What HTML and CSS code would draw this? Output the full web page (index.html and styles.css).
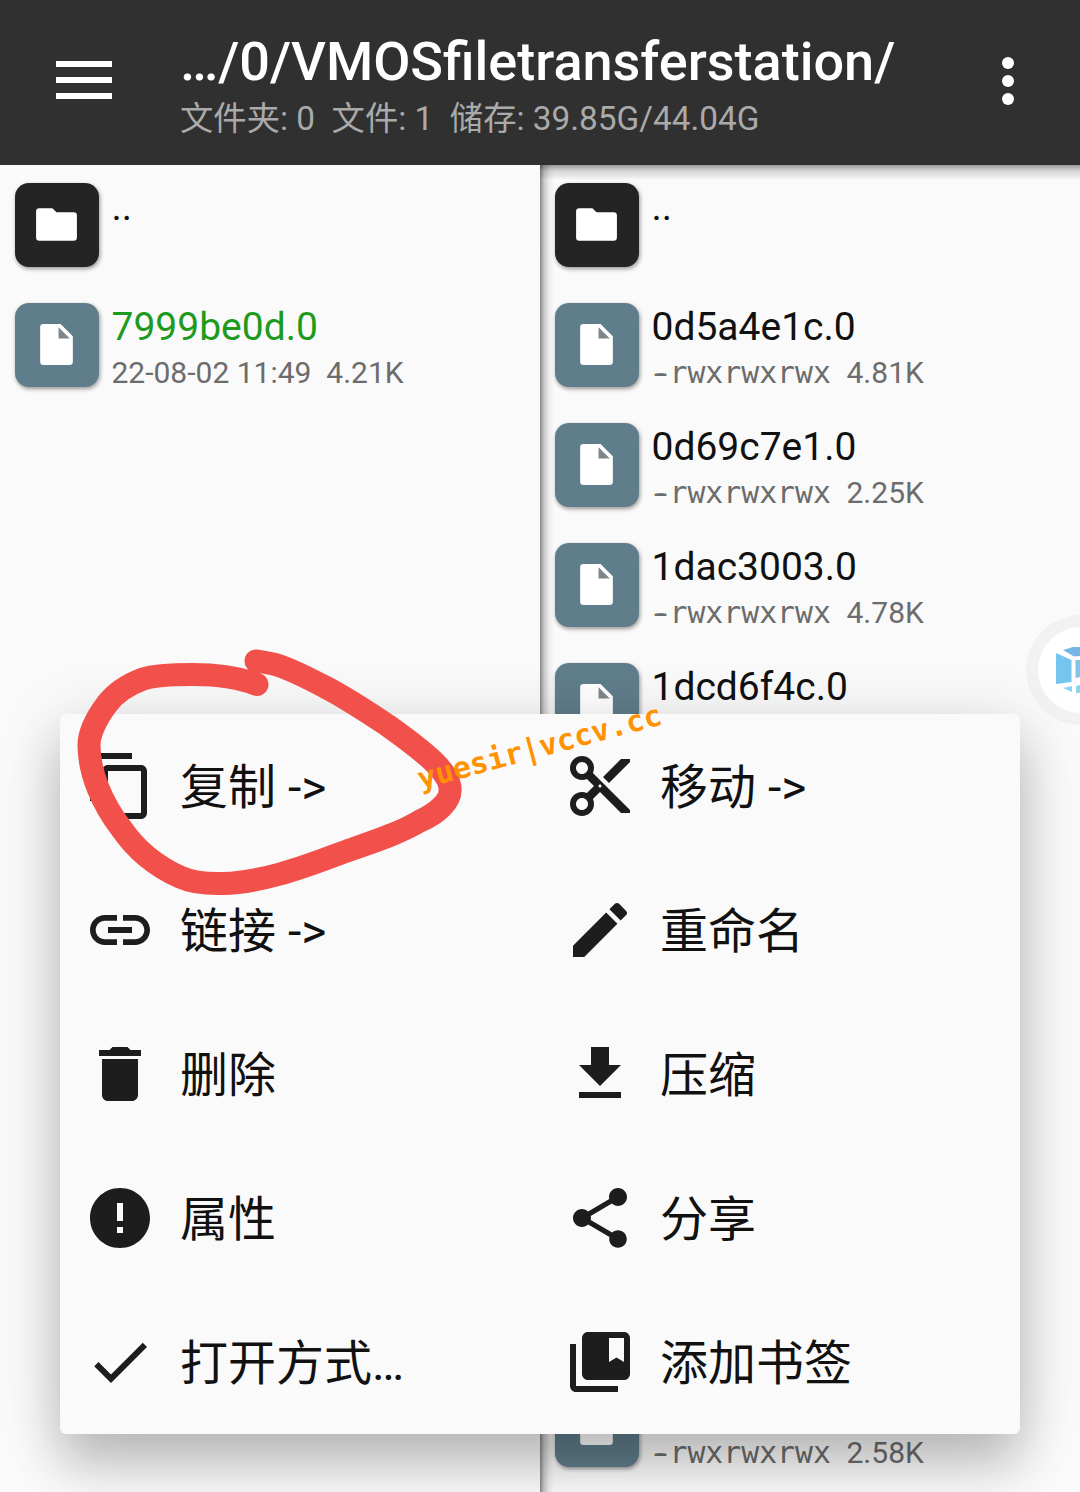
FILE: index.html
```html
<!DOCTYPE html>
<html lang="zh-CN">
<head>
<meta charset="utf-8">
<title>文件管理</title>
<link rel="stylesheet" href="styles.css">
</head>
<body>
<svg class="defs" width="0" height="0">
  <symbol id="folder" viewBox="0 0 24 24"><path d="M10 4H3.600Q2 4 2 5.600V18.400Q2 20 3.600 20H20.400Q22 20 22 18.400V7.600Q22 6 20.400 6H12z"/></symbol>
  <symbol id="file" viewBox="0 0 24 24"><path fill="#7d868a" d="M12 3h3l4.500 5v2H12z"/><path fill-rule="evenodd" d="M5.600 2Q4 2 4 3.600v16.800Q4 22 5.600 22h12.800q1.600 0 1.600-1.600V8l-6-6zM13 9V3.500L18.500 9z"/></symbol>
</svg>
<div class="screen">
  <header class="bar">
    <svg class="burger" width="56" height="38" viewBox="0 0 56 38"><path d="M0 0h56v6H0zM0 16h56v6H0zM0 32h56v6H0z"/></svg>
    <div class="heading">
      <h1 class="title">…/0/VMOSfiletransferstation/</h1>
      <p class="stats">文件夹: 0&nbsp; 文件: 1&nbsp; 储存: 39.85G/44.04G</p>
    </div>
    <svg class="more" width="12" height="48" viewBox="0 0 12 48"><circle cx="6" cy="6" r="6"/><circle cx="6" cy="24" r="6"/><circle cx="6" cy="42" r="6"/></svg>
  </header>
  <main class="panes">
    <section class="pane">
      <div class="row"><span class="tile dark"><svg><use href="#folder"/></svg></span><div class="info"><div class="name">..</div></div></div>
      <div class="row"><span class="tile"><svg><use href="#file"/></svg></span><div class="info"><div class="name green">7999be0d.0</div><div class="meta">22-08-02 11:49&nbsp; 4.21K</div></div></div>
    </section>
    <section class="pane active">
      <div class="row"><span class="tile dark"><svg><use href="#folder"/></svg></span><div class="info"><div class="name">..</div></div></div>
      <div class="row"><span class="tile"><svg><use href="#file"/></svg></span><div class="info"><div class="name">0d5a4e1c.0</div><div class="meta"><span class="mode"><span class="type">-</span>rwxrwxrwx</span>4.81K</div></div></div>
      <div class="row"><span class="tile"><svg><use href="#file"/></svg></span><div class="info"><div class="name">0d69c7e1.0</div><div class="meta"><span class="mode"><span class="type">-</span>rwxrwxrwx</span>2.25K</div></div></div>
      <div class="row"><span class="tile"><svg><use href="#file"/></svg></span><div class="info"><div class="name">1dac3003.0</div><div class="meta"><span class="mode"><span class="type">-</span>rwxrwxrwx</span>4.78K</div></div></div>
      <div class="row"><span class="tile"><svg><use href="#file"/></svg></span><div class="info"><div class="name">1dcd6f4c.0</div></div></div>
      <div class="row last"><span class="tile"><svg><use href="#file"/></svg></span><div class="info"><div class="name"></div><div class="meta"><span class="mode"><span class="type">-</span>rwxrwxrwx</span>2.58K</div></div></div>
    </section>
  </main>

  <svg class="bubble" width="60" height="120" viewBox="0 0 60 120">
    <circle cx="61" cy="60" r="55" fill="#f2f2f2"/>
    <circle cx="61" cy="60" r="43" fill="#fff"/>
    <path fill="#74c6ef" d="M36 43l15.500 7v22L36 74z"/>
    <path fill="#76b6e6" d="M43 40l10-3h7v9l-6 .5z"/>
    <path fill="#80c4e8" d="M55.500 50H60v17l-4.500 1z"/>
    <path fill="#8bd4ec" d="M43 78l9-2v6zM56 76l4-1v8h-4z"/>
  </svg>

  <nav class="menu">
    <div class="item"><svg viewBox="0 0 24 24"><path d="M16 1H4c-1.100 0-2 .9-2 2v14h2V3h12V1zm3 4H8c-1.100 0-2 .9-2 2v14c0 1.100.9 2 2 2h11c1.100 0 2-.9 2-2V7c0-1.100-.9-2-2-2zm0 16H8V7h11v14z"/></svg><span>复制 -&gt;</span></div>
    <div class="item"><svg viewBox="0 0 24 24"><path d="M9.640 7.640c.23-.5.36-1.050.36-1.640 0-2.210-1.790-4-4-4S2 3.790 2 6s1.790 4 4 4c.59 0 1.140-.13 1.640-.36L10 12l-2.360 2.360C7.140 14.130 6.590 14 6 14c-2.210 0-4 1.790-4 4s1.790 4 4 4 4-1.790 4-4c0-.59-.13-1.140-.36-1.640L12 14l7 7h3v-1L9.640 7.640zM6 8c-1.100 0-2-.89-2-2s.9-2 2-2 2 .89 2 2-.9 2-2 2zm0 12c-1.100 0-2-.89-2-2s.9-2 2-2 2 .89 2 2-.9 2-2 2zm6-7.500c-.28 0-.5-.22-.5-.5s.22-.5.5-.5.5.22.5.5-.22.5-.5.5zM19 3l-6 6 2 2 7-7V3z"/></svg><span>移动 -&gt;</span></div>
    <div class="item"><svg viewBox="0 0 24 24"><path d="M3.900 12c0-1.710 1.390-3.100 3.100-3.100h4V7H7c-2.760 0-5 2.240-5 5s2.240 5 5 5h4v-1.900H7c-1.710 0-3.100-1.390-3.100-3.100zM8 13h8v-2H8v2zm9-6h-4v1.900h4c1.710 0 3.100 1.390 3.100 3.100s-1.390 3.100-3.100 3.100h-4V17h4c2.760 0 5-2.240 5-5s-2.240-5-5-5z"/></svg><span>链接 -&gt;</span></div>
    <div class="item"><svg viewBox="0 0 24 24"><path d="M3 17.250V21h3.750L17.810 9.940l-3.750-3.750L3 17.250zM20.710 7.040c.39-.39.39-1.020 0-1.410l-2.340-2.340c-.39-.39-1.020-.39-1.410 0l-1.830 1.830 3.750 3.750 1.830-1.830z"/></svg><span>重命名</span></div>
    <div class="item"><svg viewBox="0 0 24 24"><path d="M6 19c0 1.100.9 2 2 2h8c1.100 0 2-.9 2-2V7H6v12zM19 4h-3.500l-1-1h-5l-1 1H5v2h14V4z"/></svg><span>删除</span></div>
    <div class="item"><svg viewBox="0 0 24 24"><path d="M19 9h-4V3H9v6H5l7 7 7-7zM5 18v2h14v-2H5z"/></svg><span>压缩</span></div>
    <div class="item"><svg viewBox="0 0 24 24"><path d="M12 2C6.480 2 2 6.480 2 12s4.480 10 10 10 10-4.480 10-10S17.520 2 12 2zm1 15h-2v-2h2v2zm0-4h-2V7h2v6z"/></svg><span>属性</span></div>
    <div class="item"><svg viewBox="0 0 24 24"><path d="M18 16.080c-.76 0-1.440.3-1.960.77L8.910 12.700c.05-.23.09-.46.09-.7s-.04-.47-.09-.7l7.050-4.110c.54.5 1.250.81 2.040.81 1.660 0 3-1.340 3-3s-1.340-3-3-3-3 1.340-3 3c0 .24.04.47.09.7L8.040 9.810C7.500 9.310 6.790 9 6 9c-1.660 0-3 1.340-3 3s1.340 3 3 3c.79 0 1.500-.31 2.040-.81l7.120 4.160c-.05.21-.08.43-.08.65 0 1.610 1.310 2.920 2.920 2.920 1.610 0 2.920-1.310 2.920-2.920s-1.310-2.920-2.920-2.920z"/></svg><span>分享</span></div>
    <div class="item"><svg viewBox="0 0 24 24"><path d="M9 16.170L4.830 12l-1.420 1.410L9 19 21 7l-1.410-1.410z"/></svg><span>打开方式…</span></div>
    <div class="item"><svg viewBox="0 0 24 24"><path d="M4 6H2v14c0 1.100.9 2 2 2h14v-2H4V6z"/><path d="M20 2H8c-1.100 0-2 .9-2 2v12c0 1.100.9 2 2 2h12c1.100 0 2-.9 2-2V4c0-1.100-.9-2-2-2zm0 10l-2.500-1.500L15 12V4h5v8z"/></svg><span>添加书签</span></div>
  </nav>

  <svg class="scribble" width="400" height="260" viewBox="70 640 400 260">
    <path d="M257 684.500C240 678 222 674.500 193 674.500C172 674.500 155 675 143 679C127 685 116 692 107 704C95 720 89 735 89 745C89 760 92 773 98 788C104 803 111 815 121 828C134 847 153 865 180 877C193 883 206 884 223 883.500C243 883 262 879 280 874C303 868 325 859 347 851C375 841 400 833 420 821C438 813 450 801 450 791C451 781 443 771 433 761C420 749 404 737 387 725C369 713 348 699 327 688C310 679 294 671 280 666C271 663 263 662 256 661"/>
  </svg>
  <div class="mark">yuesir|vccv.cc</div>
</div>
</body>
</html>
```
FILE: styles.css
```css
* { box-sizing: border-box; }
body { margin: 0; font-family: Roboto, "Noto Sans CJK SC", sans-serif; background: #fafafa; }
.defs { position: absolute; }
.screen { position: relative; width: 1080px; height: 1492px; overflow: hidden; display: flex; flex-direction: column; }

.bar { height: 165px; flex: none; background: #303030; display: flex; align-items: flex-start; padding: 0 66px 0 56px; fill: #fff; }
.burger { margin-top: 61px; flex: none; }
.heading { flex: 1; margin-left: 68px; padding-top: 30px; white-space: nowrap; }
.title { margin: 0; font-size: 54px; line-height: 64px; font-weight: 500; color: #fff; }
.stats { margin: 0; padding-top: 1px; font-size: 33.350px; line-height: 48px; color: #aaa; }
.more { margin-top: 57px; flex: none; }

.panes { flex: 1; display: grid; grid-template-columns: 540px 540px; min-height: 0; }
.pane { display: grid; grid-template-rows: repeat(12, 120px); height: 1327px; overflow: hidden; background: #fafafa; }
.active { background: linear-gradient(90deg, rgba(0,0,0,.46), rgba(0,0,0,.2) 4px, rgba(0,0,0,.06) 9px, transparent 14px), linear-gradient(rgba(0,0,0,.38), rgba(0,0,0,.14) 6px, rgba(0,0,0,.08) 11px, transparent 15px), #fafafa; }
.row { display: flex; align-items: flex-start; padding: 18px 0 0 15px; gap: 12.500px; }
.last { grid-row: 11; }
.tile { width: 84px; height: 84px; flex: none; border-radius: 14px; background: #607d8b; display: flex; align-items: center; justify-content: center; box-shadow: 1px 2px 4px rgba(0,0,0,.4); fill: #fff; }
.tile svg { width: 49px; height: 49px; margin: 0 1px 1px 0; }
.dark { background: #242424; }
.info { white-space: nowrap; }
.name { height: 48px; line-height: 48px; font-size: 39px; color: #111; }
.green { color: #1e9b1e; }
.meta { display: flex; line-height: 44px; font-size: 30px; color: #6c6c6c; }
.mode { font-family: "DejaVu Sans Mono", monospace; font-size: 29.800px; width: 195px; }
.type { text-shadow: -2px 0 #6c6c6c, 2px 0 #6c6c6c; }

.menu { position: absolute; left: 60px; top: 714px; width: 960px; height: 720px; display: grid; grid-template-columns: 1fr 1fr; grid-template-rows: repeat(5, 144px); background: #fafafa; border-radius: 6px; box-shadow: 0 32px 50px rgba(0,0,0,.2), 0 8px 68px rgba(0,0,0,.13); }
.item { display: flex; align-items: center; gap: 24px; padding-left: 24px; font-size: 48px; line-height: 72px; color: #111; fill: #1d1d1d; white-space: nowrap; }
.item svg { width: 72px; height: 72px; flex: none; }
.item span { padding-top: 4px; }
.bubble { position: absolute; right: 0; top: 610px; }
.scribble { position: absolute; left: 70px; top: 640px; fill: none; stroke: #f2514b; stroke-width: 23px; stroke-linecap: round; stroke-linejoin: round; }
.mark { position: absolute; left: 414px; top: 730px; font: bold 29.800px/34px "DejaVu Sans Mono", monospace; color: #ff9200; white-space: nowrap; transform: rotate(-15deg); }
```
